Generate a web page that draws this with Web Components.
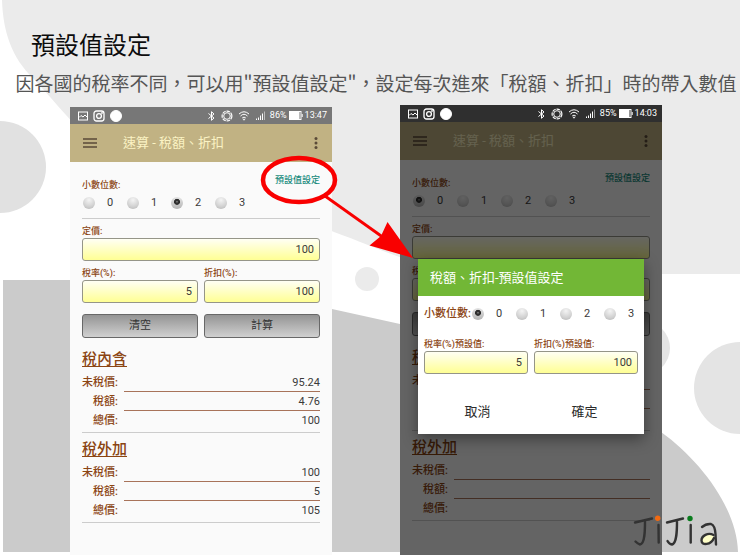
<!DOCTYPE html>
<html lang="zh-Hant">
<head>
<meta charset="utf-8">
<meta name="viewport" content="width=device-width, initial-scale=1">
<title>預設值設定</title>
<style>
  html, body { margin: 0; }
  body {
    font-family: Roboto, "Noto Sans CJK TC", sans-serif;
    --brown: #8b4513;
    --ink: #3a3a3a;
  }
</style>
</head>
<body>
<guide-slide>
  <h1 slot="title">預設值設定</h1>
  <p slot="lead">因各國的稅率不同，可以用"預設值設定"，設定每次進來「稅額、折扣」時的帶入數值</p>
  <phone-frame battery="86%" time="13:47">
    <tax-calculator decimals="2" price="100" rate="5" discount="100"
      inner="95.24,4.76,100" outer="100,5,105"></tax-calculator>
  </phone-frame>
  <phone-frame battery="85%" time="14:03" dimmed>
    <tax-calculator decimals="0" price="" rate="" discount="" inner=",," outer=",,"></tax-calculator>
    <defaults-dialog slot="dialog"></defaults-dialog>
  </phone-frame>
  <callout-arrow slot="overlay"></callout-arrow>
  <jijia-logo slot="overlay"></jijia-logo>
</guide-slide>

<script>
const define = (name, render) => customElements.define(name, class extends HTMLElement {
  connectedCallback() {
    if (this.shadowRoot) return;
    const t = document.createElement('template');
    t.innerHTML = render(this);
    this.attachShadow({ mode: 'open' }).append(t.content.cloneNode(true));
  }
});
const attr = (el, name) => el.getAttribute(name) || '';

define('slide-backdrop', () => `
  <style>
    :host { display: block; position: absolute; inset: 0; z-index: -1; background: #fff; }
    svg { display: block; width: 100%; height: 100%; }
  </style>
  <svg viewBox="0 0 740 555" preserveAspectRatio="none" aria-hidden="true">
    <path fill="#ebebeb" d="M2 0C3 32 12 58 33 78C68 116 100 160 150 180C220 202 300 216 334 232C390 252 420 272 500 274H740V0Z"/>
    <circle cx="0" cy="167" r="46" fill="#e1e1e1"/>
    <path fill="#cbcbcb" d="M3 280H100C200 282 290 298 332 309L400 324C470 345 560 385 661 432C700 460 737 508 738 552H3Z"/>
    <circle cx="367" cy="279" r="12" fill="#ebebeb"/>
    <circle cx="643" cy="348" r="27" fill="#e4e4e4"/>
    <circle cx="740" cy="388" r="46" fill="#e4e4e4"/>
  </svg>`);

define('guide-slide', () => `
  <style>
    :host { display: flex; flex-direction: column; min-height: 100vh; position: relative; z-index: 0; overflow: hidden; }
    header { padding: 25px 0 7px; font-family: "Noto Sans CJK TC", sans-serif; }
    ::slotted(h1) { margin: 0 0 0 31px; font-size: 24px; line-height: 38px; font-weight: 400; color: #0c0c0c; }
    ::slotted(p) { margin: 5px 0 0 12px; font-size: 19px; line-height: 30px; color: #555; text-align: center; white-space: nowrap; }
    main { flex: 1; display: grid; grid-template-columns: 1fr 1fr; gap: 68px; padding: 0 78px 0 70px; }
    main ::slotted(phone-frame:not([dimmed])) { margin-top: 2px; }
  </style>
  <slide-backdrop></slide-backdrop>
  <header><slot name="title"></slot><slot name="lead"></slot></header>
  <main><slot></slot></main>
  <slot name="overlay"></slot>`);

define('status-bar', el => `
  <style>
    :host { display: flex; align-items: center; gap: 5px; height: 17px; padding: 0 5px 0 8px; color: #fff; font-size: 9px; line-height: 17px; }
    svg { display: block; fill: none; stroke: currentColor; }
    .gap { flex: 1; }
    .power { display: flex; align-items: center; gap: 2px; }
  </style>
  <svg width="10" height="10" viewBox="0 0 10 10"><rect x=".5" y="1" width="9" height="8"/><path d="M1 6.500L3 4.500L5 6L7 4L9 6"/></svg>
  <svg width="12" height="12" viewBox="0 0 12 12" stroke-width="1.300"><rect x="1" y="1" width="10" height="10" rx="2.500"/><circle cx="6" cy="6" r="2.400"/><circle cx="9" cy="3" r=".3"/></svg>
  <svg width="12" height="12" viewBox="0 0 12 12"><circle cx="6" cy="6" r="5.500" fill="#fff"/></svg>
  <span class="gap"></span>
  <svg width="9" height="10" viewBox="0 0 9 10"><path d="M1.500 2.500L7 7L4.500 9.300V.7L7 3L1.500 7.500"/></svg>
  <svg width="12" height="12" viewBox="0 0 12 12"><circle cx="6" cy="6" r="3.300"/><circle cx="6" cy="6" r="4.900" stroke-width="1.200" stroke-dasharray="3.500 .9"/></svg>
  <svg width="12" height="12" viewBox="0 0 12 12"><path d="M1 4Q6-.5 11 4M2.500 6Q6 2.500 9.500 6M4.200 8Q6 6.200 7.800 8"/><circle cx="6" cy="9.500" r=".6"/></svg>
  <svg width="10" height="10" viewBox="0 0 10 10"><path d="M1.500 9V7.500M3.500 9V6.500M5.500 9V4.500M7.500 9V2.500"/><path d="M9.500 9V.5" opacity=".5"/></svg>
  <div class="power"><span>${attr(el, 'battery')}</span>
    <svg width="14" height="9" viewBox="0 0 14 9"><rect x=".5" y=".5" width="11.500" height="8"/><rect x="1" y="1" width="9" height="7" fill="#fff"/><path d="M13.200 3V6"/></svg>
    <span>${attr(el, 'time')}</span></div>`);

define('app-bar', () => `
  <style>
    :host { display: flex; align-items: center; height: 38px; padding: 0 12px 0 13px; background: #c1b283; color: #5a4a38; }
    button { display: block; border: 0; padding: 0; background: none; color: inherit; }
    svg { display: block; }
    h2 { flex: 1; margin: 0 0 0 26px; font-size: 13px; line-height: 20px; font-weight: 400; color: #fbf3c4; }
  </style>
  <button type="button" aria-label="選單"><svg width="14" height="12" viewBox="0 0 14 12"><path d="M0 2H14M0 6H14M0 10H14" stroke="currentColor" stroke-width="1.600"/></svg></button>
  <h2>速算 - 稅額、折扣</h2>
  <button type="button" aria-label="更多"><svg width="8" height="14" viewBox="0 0 8 14" fill="currentColor"><circle cx="4" cy="2.500" r="1.500"/><circle cx="4" cy="7" r="1.500"/><circle cx="4" cy="11.500" r="1.500"/></svg></button>`);

define('phone-frame', el => `
  <style>
    :host { display: flex; flex-direction: column; min-width: 0; background: #fafafa; }
    status-bar { background: #777; }
    .screen { flex: 1; position: relative; }
    .scrim { display: none; position: absolute; inset: 0; z-index: 1; background: rgba(0, 0, 0, .6); }
    :host([dimmed]) .scrim { display: block; }
    :host([dimmed]) status-bar { background: #2f2f2f; }
  </style>
  <status-bar battery="${attr(el, 'battery')}" time="${attr(el, 'time')}"></status-bar>
  <div class="screen">
    <div ${el.hasAttribute('dimmed') ? 'inert' : ''}><app-bar></app-bar><slot></slot></div>
    <div class="scrim"><slot name="dialog"></slot></div>
  </div>`);

define('decimal-choice', el => `
  <style>
    :host { display: block; color: var(--brown); font-size: 9px; line-height: 14px; font-weight: 500; }
    :host([inline]) { display: flex; align-items: center; font-size: 11px; white-space: nowrap; }
    .options { display: flex; height: 22px; align-items: center; color: var(--ink); font-size: 11px; font-weight: 400; }
    label { display: flex; align-items: center; gap: 12px; width: 44px; box-sizing: border-box; padding-left: 1px; }
    input {
      appearance: none; margin: 0; width: 12px; height: 12px; border-radius: 50%;
      background: radial-gradient(circle at 50% 25%, #f4f4f4, #d2d2d2 60%, #b4b4b4);
    }
    input:checked { background: radial-gradient(circle at 50% 40%, #aaa 0, #333 12%, #2b2b2b 28%, transparent 36%), linear-gradient(#e4e4e4, #b4b4b4); }
  </style>
  <span id="name">小數位數:</span>
  <div class="options" role="radiogroup" aria-labelledby="name">
    ${[0, 1, 2, 3].map(n => `<label><input type="radio" name="decimals" value="${n}" ${attr(el, 'value') == n ? 'checked' : ''}>${n}</label>`).join('')}
  </div>`);

define('number-field', el => `
  <style>
    :host { display: block; min-width: 0; }
    label { display: block; color: var(--brown); font-size: 9px; line-height: 14px; font-weight: 500; white-space: nowrap; }
    input {
      display: block; box-sizing: border-box; width: 100%; height: 23px; padding: 0 5px; border: 1px solid #959588; border-radius: 3px;
      background: linear-gradient(#fffff4, #ffff94); color: var(--ink); font: 11px/21px Roboto, sans-serif; text-align: right;
    }
  </style>
  <label for="field">${attr(el, 'label')}</label>
  <input id="field" type="text" inputmode="decimal" value="${attr(el, 'value')}">`);

define('metal-button', () => `
  <style>
    :host { display: block; }
    button {
      display: block; width: 100%; height: 24px; padding: 0; border: 1px solid #686868; border-radius: 3px;
      background: linear-gradient(#949494, #d0d0d0); color: #333; font: inherit; font-size: 11px; line-height: 22px;
    }
  </style>
  <button type="button"><slot></slot></button>`);

define('result-section', el => `
  <style>
    :host { display: block; padding-top: 4px; color: var(--brown); }
    h3 { margin: 0 0 2px; font-size: 15px; line-height: 24px; font-weight: 500; text-decoration: underline; text-underline-offset: 2px; text-decoration-thickness: 1px; }
    dl { margin: 0; display: grid; grid-template-columns: 36px 1fr; column-gap: 6px; padding-bottom: 2px; border-bottom: 1px solid #ccc; font-size: 11px; }
    dt, dd { margin: 0; height: 19px; box-sizing: border-box; line-height: 19px; }
    dt { text-align: right; font-weight: 500; white-space: nowrap; }
    dd { text-align: right; color: var(--ink); border-bottom: 1px solid #a8735a; }
    dd:last-child { border-bottom: 0; }
  </style>
  <h3>${attr(el, 'heading')}</h3>
  <dl>${['未稅價:', '稅額:', '總價:'].map((k, i) => `<dt>${k}</dt><dd>${attr(el, 'values').split(',')[i]}</dd>`).join('')}</dl>`);

define('tax-calculator', el => `
  <style>
    :host { display: block; padding: 11px 12px 0; }
    .top { display: flex; justify-content: space-between; align-items: flex-start; padding-bottom: 4px; border-bottom: 1px solid #ccc; }
    decimal-choice { padding-top: 5px; }
    a { color: #188a7c; font-size: 9px; line-height: 14px; font-weight: 500; text-decoration: none; white-space: nowrap; }
    .fields { display: grid; grid-template-columns: 1fr 1fr; gap: 5px 6px; padding: 5px 0 11px; }
    .wide { grid-column: 1 / -1; }
    .actions { display: grid; grid-template-columns: 1fr 1fr; gap: 6px; padding-bottom: 5px; }
  </style>
  <div class="top"><decimal-choice value="${attr(el, 'decimals')}"></decimal-choice><a href="#defaults">預設值設定</a></div>
  <div class="fields">
    <number-field class="wide" label="定價:" value="${attr(el, 'price')}"></number-field>
    <number-field label="稅率(%):" value="${attr(el, 'rate')}"></number-field>
    <number-field label="折扣(%):" value="${attr(el, 'discount')}"></number-field>
  </div>
  <div class="actions"><metal-button>清空</metal-button><metal-button>計算</metal-button></div>
  <result-section heading="稅內含" values="${attr(el, 'inner')}"></result-section>
  <result-section heading="稅外加" values="${attr(el, 'outer')}"></result-section>`);

define('defaults-dialog', () => `
  <style>
    :host { display: block; margin: 137px 18px 0; background: #fff; box-shadow: 0 5px 14px rgba(0, 0, 0, .4); }
    h2 { margin: 0; padding: 0 12px; background: #72b736; color: #fff; font-size: 13px; line-height: 37px; font-weight: 400; white-space: nowrap; }
    form { padding: 7px 6px 6px; }
    .fields { display: grid; grid-template-columns: 1fr 1fr; gap: 6px; padding: 12px 0 18px; }
    .actions { display: grid; grid-template-columns: 1fr 1fr; }
    button { height: 36px; padding: 0; border: 0; background: none; color: #2c2c2c; font: inherit; font-size: 13px; }
  </style>
  <div role="dialog" aria-labelledby="title">
    <h2 id="title">稅額、折扣-預設值設定</h2>
    <form>
      <decimal-choice inline value="0"></decimal-choice>
      <div class="fields">
        <number-field label="稅率(%)預設值:" value="5"></number-field>
        <number-field label="折扣(%)預設值:" value="100"></number-field>
      </div>
      <div class="actions"><button type="button">取消</button><button type="button">確定</button></div>
    </form>
  </div>`);

define('callout-arrow', () => `
  <style>
    :host { display: block; position: absolute; inset: 0; z-index: 2; pointer-events: none; }
    svg { display: block; width: 100%; height: 100%; }
  </style>
  <svg viewBox="0 0 740 555" preserveAspectRatio="none" aria-hidden="true">
    <ellipse cx="299" cy="180" rx="36" ry="22" fill="none" stroke="#f90000" stroke-width="4.500"/>
    <path d="M325 196L384 238" stroke="#f90000" stroke-width="2.800"/>
    <path d="M387.500 222L413 258L369.500 245.500L381 236Z" fill="#f90000"/>
  </svg>`);

define('jijia-logo', () => `
  <style>
    :host { display: block; position: absolute; right: 19px; bottom: 7px; z-index: 2; }
    svg { display: block; }
  </style>
  <svg width="88" height="34" viewBox="633 514 88 34" fill="none" stroke="#333" stroke-width="2.400" stroke-linecap="round" stroke-linejoin="round" role="img" aria-label="JiJia">
    <path d="M635 522.500L652 518.500M645 521C645 530 645 544 640 544.500Q638 544 635.500 541.500"/>
    <path d="M658.500 525L658.700 542.500"/>
    <path d="M667 522.500L683 518.500M677 521C677 530 677 543 672 544.500Q669 544 667.500 541"/>
    <path d="M690.700 525V542.500"/>
    <path fill="#ffffc8" d="M713.500 535C708 532 701.500 536 701.500 540.500C701.500 546 711 545 714 538"/>
    <path d="M702 527Q706 523.500 711 524Q715 525.500 715.500 534L716 544.500"/>
    <circle cx="657.700" cy="518.300" r="2.700" fill="#f26a12" stroke="none"/>
    <circle cx="690" cy="518.500" r="2.700" fill="#087c1c" stroke="none"/>
  </svg>`);
</script>
</body>
</html>
